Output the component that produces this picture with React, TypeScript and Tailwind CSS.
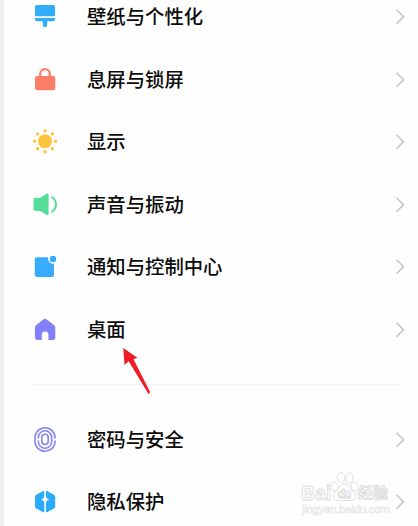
// App.tsx
import React from 'react';

interface RowProps {
    label: string;
    icon: React.ReactNode;
}

const Icon: React.FC<{ children: React.ReactNode }> = ({ children }) => (
    <svg width="30" height="30" viewBox="0 0 30 30" fill="none" className="shrink-0">
        {children}
    </svg>
);

const wallpaperIcon = (
    <Icon>
        <path d="M6.8 3h16.4A1.8 1.8 0 0 1 25 4.8V14.2H5V4.8A1.8 1.8 0 0 1 6.800 3Z" fill="#31adfb" />
        <path d="M5 16H25V17A2.200 2.200 0 0 1 22.800 19.200H17.200V23A2.200 2.200 0 0 1 12.800 23V19.200H7.200A2.200 2.200 0 0 1 5 17Z" fill="#31adfb" />
    </Icon>
);

const lockIcon = (
    <Icon>
        <rect x="5" y="11" width="20.3" height="14.3" rx="2.200" fill="#fd7d68" />
        <path d="M10.200 12V9A4.800 4.800 0 0 1 19.800 9V12" stroke="#fd7d68" strokeWidth="2.200" />
    </Icon>
);

const sunIcon = (
    <Icon>
        <g fill="#fec43e">
            <circle cx="15" cy="14.300" r="7" />
            <circle cx="15" cy="3.800" r="1.700" />
            <circle cx="15" cy="24.800" r="1.700" />
            <circle cx="4.500" cy="14.300" r="1.700" />
            <circle cx="25.500" cy="14.300" r="1.700" />
            <circle cx="7.600" cy="6.900" r="1.700" />
            <circle cx="22.400" cy="6.900" r="1.700" />
            <circle cx="7.600" cy="21.700" r="1.700" />
            <circle cx="22.400" cy="21.700" r="1.700" />
        </g>
    </Icon>
);

const soundIcon = (
    <Icon>
        <path d="M5.200 7.800H10.500L16.200 3.900Q18.600 2.800 18.600 5V23.800Q18.600 26 16.200 24.800L10.500 20.900H5.200Q3.500 20.900 3.500 19.200V9.500Q3.500 7.800 5.200 7.800Z" fill="#56dd9a" />
        <path d="M22.100 7Q26 10.200 26 14.400T22.100 21.800" stroke="#56dd9a" strokeWidth="2" strokeLinecap="round" />
    </Icon>
);

const noticeIcon = (
    <Icon>
        <path d="M7 5.300H18.300A5 5 0 0 0 24 11.600V23A2 2 0 0 1 22 25H7A2.200 2.200 0 0 1 4.800 22.800V7.500A2.200 2.200 0 0 1 7 5.300Z" fill="#38acfc" />
        <circle cx="23" cy="6.900" r="3.200" fill="#38acfc" />
    </Icon>
);

const homeIcon = (
    <Icon>
        <path d="M13.600 4.200Q15 3.300 16.400 4.200L24 9.900Q25.300 10.900 25.300 12.500V22.800Q25.300 24.900 23.200 24.900H18.400V19.800A3.300 3.300 0 0 0 11.800 19.800V24.900H7Q4.900 24.900 4.900 22.800V12.500Q4.900 10.900 6.200 9.900Z" fill="#8280fb" />
    </Icon>
);

const fingerprintIcon = (
    <Icon>
        <g stroke="#8784f5" strokeWidth="1.600" strokeLinecap="round">
            <path d="M5 16.500V12.500A10 9.800 0 0 1 25 12.500V13M25 16V16.500A10 9.800 0 0 1 5 16.500" />
            <path d="M8.300 13V12.500A6.700 6.700 0 0 1 21.700 12.500V16.500A6.700 6.700 0 0 1 8.300 16.500V16" />
            <rect x="11.800" y="9.300" width="6.400" height="10.200" rx="3.200" />
        </g>
    </Icon>
);

const privacyIcon = (
    <Icon>
        <path d="M14.300 4V8.800Q14 12 10.800 12.500Q14 13 14.300 16.200V25.200Q13.500 25.300 12.700 24.900L6.300 21.500Q5 20.800 5 19.400V9.800Q5 8.400 6.300 7.700L12.700 4.300Q13.500 3.900 14.300 4Z" fill="#2aacfb" />
        <path d="M15.900 4V8.800Q16.200 12 19.400 12.500Q16.200 13 15.900 16.200V25.200Q16.700 25.300 17.500 24.900L23.900 21.500Q25.200 20.800 25.200 19.400V9.800Q25.200 8.400 23.900 7.700L17.500 4.300Q16.700 3.900 15.900 4Z" fill="#2aacfb" />
    </Icon>
);

const generalRows: RowProps[] = [
    { label: '壁纸与个性化', icon: wallpaperIcon },
    { label: '息屏与锁屏', icon: lockIcon },
    { label: '显示', icon: sunIcon },
    { label: '声音与振动', icon: soundIcon },
    { label: '通知与控制中心', icon: noticeIcon },
    { label: '桌面', icon: homeIcon },
];

const securityRows: RowProps[] = [
    { label: '密码与安全', icon: fingerprintIcon },
    { label: '隐私保护', icon: privacyIcon },
];

const SettingRow: React.FC<RowProps> = ({ label, icon }) => (
    <div className="flex h-[62.5px] items-center pl-[26px] pr-[13px]">
        {icon}
        <span className="ml-[27px] flex-1 whitespace-nowrap pb-[2px] text-[19.35px] font-medium leading-[30px] text-[#0c0c0c]">{label}</span>
        <svg width="10" height="18" viewBox="0 0 10 18" fill="none" className="shrink-0">
            <path d="M1.500 1.700L8.500 8.700L1.500 15.700" stroke="#c4c4c4" strokeWidth="1.600" />
        </svg>
    </div>
);

const Watermark: React.FC = () => (
    <div className="absolute left-[296px] top-[470px] h-[48px] w-[94px] font-['Liberation_Sans','Noto_Sans_CJK_SC',sans-serif]">
        <svg width="94" height="48" viewBox="0 0 94 48" fill="#fff" stroke="#dcdcdc" strokeWidth="0.900">
            <text x="1" y="30" fontSize="21" fontWeight="700" textLength="30" lengthAdjust="spacingAndGlyphs">Bai</text>
            <ellipse cx="34.500" cy="16.500" rx="3.500" ry="4.300" />
            <ellipse cx="41" cy="7.500" rx="3.700" ry="5" />
            <ellipse cx="49.500" cy="8" rx="3.700" ry="5" />
            <ellipse cx="54.500" cy="16.500" rx="3.500" ry="4.300" />
            <path d="M45 14C50 14 50 19 54 22C59 26 55 31 50 30.500H39C33 31 31 25 36 21C40 18 40 14 45 14Z" />
            <text x="37.500" y="28" fontSize="12.500" fontWeight="700" textLength="14">du</text>
            <text x="58" y="28" fontSize="15" fontWeight="700">经验</text>
            <text x="2" y="42.500" fontSize="11.500" stroke="#e4e4e4" strokeWidth="0.600" textLength="88">jingyan.baidu.com</text>
        </svg>
    </div>
);

const App: React.FC = () => {
    return (
        <div className="relative h-[526px] w-[418px] overflow-hidden border-l-4 border-[#efefef] bg-[#fefefe] font-['Noto_Sans_CJK_SC',sans-serif]">
            <div className="-mt-[14.25px]">
                {generalRows.map((row) => (
                    <SettingRow key={row.label} {...row} />
                ))}
            </div>
            <div className="ml-[28px] mr-[16px] mt-[23px] h-px bg-[#f4f4f4]" />
            <div className="mt-[23.5px]">
                {securityRows.map((row) => (
                    <SettingRow key={row.label} {...row} />
                ))}
            </div>
            <svg width="30" height="50" viewBox="0 0 30 50" className="absolute left-[118px] top-[346px]">
                <path d="M1.300 2L15.300 11.700L11.500 13.200L28.200 46.300L26.500 48L6.700 15.300L2.500 19Z" fill="#ee1c25" />
            </svg>
            <Watermark />
        </div>
    );
};

export default App;
